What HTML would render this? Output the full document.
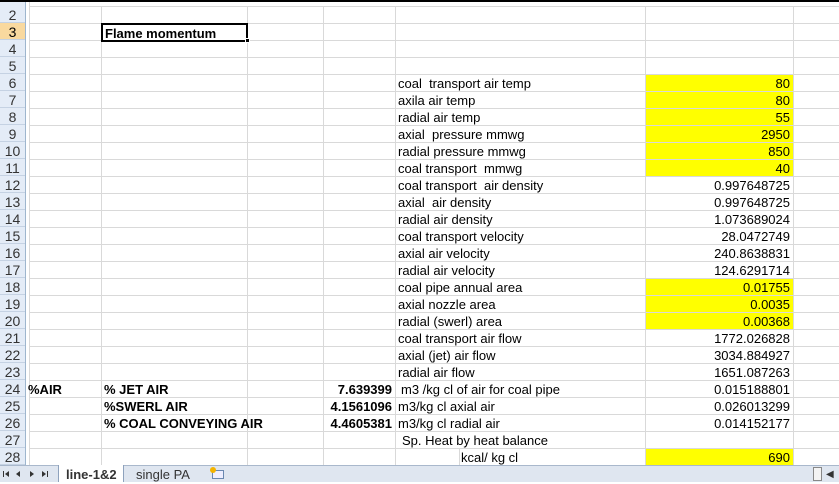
<!DOCTYPE html>
<html><head><style>
*{margin:0;padding:0;box-sizing:border-box}
body{width:839px;height:482px;overflow:hidden;background:#fff;position:relative;font-family:"Liberation Sans",Arial,sans-serif;font-size:13px;color:#000}
.a{position:absolute}
.hl{position:absolute;left:29px;width:810px;height:1px;background:#d9d9d9}
.vl{position:absolute;top:6px;height:459px;width:1px;background:#d9d9d9}
.rh{position:absolute;left:0;width:25px;height:17px;background:#e4ecf7;border-bottom:1px solid #c5d2e3;color:#333;font-size:14px;text-align:center;line-height:18px}
.t{position:absolute;height:17px;line-height:19px;white-space:nowrap}
.r{text-align:right}
.y{position:absolute;left:645px;width:148px;height:17px;background:#ffff00}
.b{font-weight:bold}
</style></head><body>
<div class="a" style="left:0;top:0;width:839px;height:2px;background:#000"></div>
<div class="a" style="left:0;top:2px;width:25px;height:4px;background:#e4ecf7"></div>
<div class="a" style="left:25px;top:2px;width:1px;height:463px;background:#9eb6ce"></div>
<div class="a" style="left:29px;top:2px;width:1px;height:463px;background:#d9d9d9"></div>

<div class="y" style="top:74px;height:102px"></div>
<div class="y" style="top:278px;height:51px"></div>
<div class="y" style="top:448px"></div>

<div class="vl" style="left:101px"></div>
<div class="vl" style="left:247px"></div>
<div class="vl" style="left:323px"></div>
<div class="vl" style="left:395px"></div>
<div class="vl" style="left:645px"></div>
<div class="vl" style="left:793px"></div>
<div class="a" style="left:459px;top:448px;width:1px;height:17px;background:#d9d9d9"></div>
<div id="g"></div>

<div class="a" style="left:101px;top:23px;width:147px;height:19px;border:2px solid #000"></div>
<div class="a" style="left:245px;top:38px;width:5px;height:5px;background:#000;border:1px solid #fff"></div>
<div class="t b" style="left:105px;top:24px">Flame momentum</div>

<div class="t" style="left:398px;top:74px">coal&nbsp; transport air temp</div>
<div class="t" style="left:398px;top:91px">axila air temp</div>
<div class="t" style="left:398px;top:108px">radial air temp</div>
<div class="t" style="left:398px;top:125px">axial&nbsp; pressure mmwg</div>
<div class="t" style="left:398px;top:142px">radial pressure mmwg</div>
<div class="t" style="left:398px;top:159px">coal transport&nbsp; mmwg</div>
<div class="t" style="left:398px;top:176px">coal transport&nbsp; air density</div>
<div class="t" style="left:398px;top:193px">axial&nbsp; air density</div>
<div class="t" style="left:398px;top:210px">radial air density</div>
<div class="t" style="left:398px;top:227px">coal transport velocity</div>
<div class="t" style="left:398px;top:244px">axial air velocity</div>
<div class="t" style="left:398px;top:261px">radial air velocity</div>
<div class="t" style="left:398px;top:278px">coal pipe annual area</div>
<div class="t" style="left:398px;top:295px">axial nozzle area</div>
<div class="t" style="left:398px;top:312px">radial (swerl) area</div>
<div class="t" style="left:398px;top:329px">coal transport air flow</div>
<div class="t" style="left:398px;top:346px">axial (jet) air flow</div>
<div class="t" style="left:398px;top:363px">radial air flow</div>
<div class="t" style="left:401px;top:380px">m3 /kg cl of air for coal pipe</div>
<div class="t" style="left:398px;top:397px">m3/kg cl axial air</div>
<div class="t" style="left:398px;top:414px">m3/kg cl radial air</div>
<div class="t" style="left:402px;top:431px">Sp. Heat by heat balance</div>
<div class="t" style="left:461px;top:448px">kcal/ kg cl</div>

<div class="t r" style="left:645px;width:145px;top:74px">80</div>
<div class="t r" style="left:645px;width:145px;top:91px">80</div>
<div class="t r" style="left:645px;width:145px;top:108px">55</div>
<div class="t r" style="left:645px;width:145px;top:125px">2950</div>
<div class="t r" style="left:645px;width:145px;top:142px">850</div>
<div class="t r" style="left:645px;width:145px;top:159px">40</div>
<div class="t r" style="left:645px;width:145px;top:176px">0.997648725</div>
<div class="t r" style="left:645px;width:145px;top:193px">0.997648725</div>
<div class="t r" style="left:645px;width:145px;top:210px">1.073689024</div>
<div class="t r" style="left:645px;width:145px;top:227px">28.0472749</div>
<div class="t r" style="left:645px;width:145px;top:244px">240.8638831</div>
<div class="t r" style="left:645px;width:145px;top:261px">124.6291714</div>
<div class="t r" style="left:645px;width:145px;top:278px">0.01755</div>
<div class="t r" style="left:645px;width:145px;top:295px">0.0035</div>
<div class="t r" style="left:645px;width:145px;top:312px">0.00368</div>
<div class="t r" style="left:645px;width:145px;top:329px">1772.026828</div>
<div class="t r" style="left:645px;width:145px;top:346px">3034.884927</div>
<div class="t r" style="left:645px;width:145px;top:363px">1651.087263</div>
<div class="t r" style="left:645px;width:145px;top:380px">0.015188801</div>
<div class="t r" style="left:645px;width:145px;top:397px">0.026013299</div>
<div class="t r" style="left:645px;width:145px;top:414px">0.014152177</div>
<div class="t r" style="left:645px;width:145px;top:448px">690</div>

<div class="t b" style="left:28px;top:380px">%AIR</div>
<div class="t b" style="left:104px;top:380px">% JET AIR</div>
<div class="t b" style="left:104px;top:397px">%SWERL AIR</div>
<div class="t b" style="left:104px;top:414px">% COAL CONVEYING AIR</div>
<div class="t b r" style="left:323px;width:69px;top:380px">7.639399</div>
<div class="t b r" style="left:300px;width:92px;top:397px">4.1561096</div>
<div class="t b r" style="left:300px;width:92px;top:414px">4.4605381</div>

<div class="a" style="left:0;top:465px;width:839px;height:17px;background:#dfe6f0;border-top:1px solid #a9b8cc"></div>
<svg class="a" style="left:0;top:466px" width="56" height="16" viewBox="0 0 56 16">
<g fill="#333"><rect x="3" y="5" width="1" height="6"/><path d="M9 5v6l-4-3z"/><path d="M20 5v6l-4-3z"/><path d="M30 5v6l4-3z"/><path d="M42 5v6l4-3z"/><rect x="47" y="5" width="1" height="6"/></g></svg>
<div class="a" style="left:58px;top:465px;width:66px;height:17px;background:#fff;border-left:1px solid #8ea2bd;border-right:1px solid #8ea2bd"></div>
<div class="t b" style="left:66px;top:465px;color:#333">line-1&amp;2</div>
<div class="t" style="left:136px;top:465px;color:#333">single PA</div>
<div class="a" style="left:212px;top:470px;width:12px;height:9px;border:1px solid #6a88b0;background:#eef"></div>
<div class="a" style="left:210px;top:467px;width:6px;height:6px;background:#f4b400;border-radius:50%"></div>
<div class="a" style="left:813px;top:467px;width:9px;height:14px;border:1px solid #888;background:#f3f3f3"></div>
<div class="t" style="left:826px;top:465px;font-size:10px;color:#333">◀</div>

<script>
var g=document.getElementById('g'),h='';
for(var r=2;r<=28;r++){var t=6+(r-2)*17;
h+='<div class="hl" style="top:'+(t+17)+'px"></div>';
h+='<div class="rh" style="top:'+t+'px'+(r==3?';background:#f9d99f;color:#000':'')+'">'+r+'</div>';}
h+='<div class="hl" style="top:6px"></div>';
g.innerHTML=h;
</script>
</body></html>
